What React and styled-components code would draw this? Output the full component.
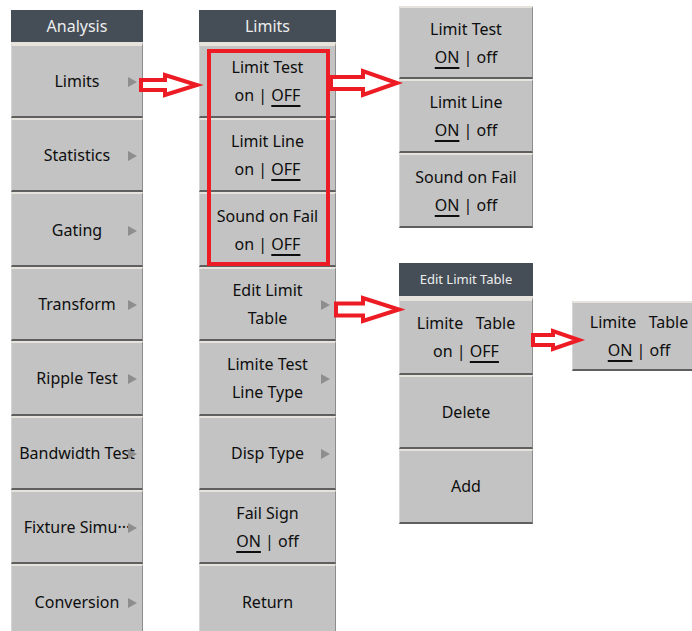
import React from "react";
import styled, { createGlobalStyle } from "styled-components";

const Global = createGlobalStyle`
  html, body { margin: 0; padding: 0; background: #ffffff; }
  body { font-family: "Noto Sans", "Open Sans", sans-serif; }
`;

const Canvas = styled.div`
  position: relative;
  width: 692px;
  height: 631px;
  overflow: hidden;
  background: #fff;
  display: flex;
  align-items: flex-start;
  padding-left: 11px;
  box-sizing: border-box;
`;

const Column = styled.div`
  display: flex;
  flex-direction: column;
  flex: none;
  width: ${(p) => p.$w}px;
  margin-top: ${(p) => p.$top}px;
  margin-left: ${(p) => p.$left || 0}px;
`;

const Panel = styled.div`
  display: flex;
  flex-direction: column;
  margin-top: ${(p) => p.$top || 0}px;
`;

const Header = styled.div`
  height: ${(p) => p.$h || 32}px;
  background: #454d57;
  color: #ededed;
  font-size: ${(p) => p.$fs || 16}px;
  display: flex;
  align-items: center;
  justify-content: center;
  white-space: nowrap;
`;

const Button = styled.div`
  position: relative;
  box-sizing: border-box;
  height: ${(p) => p.$h || 74.4}px;
  background: #c3c3c3;
  border-top: ${(p) => p.$bt || 2}px solid #e6e3dc;
  border-bottom: 2px solid #5f5f5f;
  border-left: 1px solid #d6d6d6;
  border-right: 1px solid #8d8d8d;
  display: flex;
  flex-direction: column;
  align-items: center;
  justify-content: center;
  font-size: 16px;
  line-height: 28px;
  color: #0e0e0e;
  white-space: pre;
`;

const Line = styled.span`
  display: block;
  text-align: center;
`;

const Under = styled.span`
  text-decoration: underline;
  text-decoration-thickness: 2px;
  text-underline-offset: 4px;
`;

const Tri = styled.span`
  position: absolute;
  right: 5px;
  top: 50%;
  margin-top: -4px;
  width: 0;
  height: 0;
  border-left: 9px solid #8e8e8e;
  border-top: 5px solid transparent;
  border-bottom: 5px solid transparent;
`;

const RedBox = styled.div`
  position: absolute;
  left: 207px;
  top: 49px;
  width: 123px;
  height: 217px;
  box-sizing: border-box;
  border: 4px solid #ed1c24;
  pointer-events: none;
`;

const ArrowSvg = styled.svg`
  position: absolute;
  left: ${(p) => p.$x}px;
  top: ${(p) => p.$y}px;
  overflow: visible;
`;

function Arrow({ x, y, w, h, hx, hs }) {
  const s = 2;
  const cy = h / 2;
  const pts = [
    [s, cy - hs],
    [hx, cy - hs],
    [hx, s],
    [w - s, cy],
    [hx, h - s],
    [hx, cy + hs],
    [s, cy + hs],
  ]
    .map((p) => p.join(","))
    .join(" ");
  return (
    <ArrowSvg $x={x} $y={y} width={w} height={h} viewBox={`0 0 ${w} ${h}`}>
      <polygon points={pts} fill="#ffffff" stroke="#ed1c24" strokeWidth="4" strokeLinejoin="miter" />
    </ArrowSvg>
  );
}

function OnOff({ on }) {
  return on ? (
    <Line>
      <Under>ON</Under> | off
    </Line>
  ) : (
    <Line>
      on | <Under>OFF</Under>
    </Line>
  );
}

export default function App() {
  const col1 = [
    "Limits",
    "Statistics",
    "Gating",
    "Transform",
    "Ripple Test",
    "Bandwidth Test",
    "Fixture Simu\u00b7\u00b7\u00b7",
  ];
  return (
    <>
      <Global />
      <Canvas>
        <Column $w={132} $top={10}>
          <Header>Analysis</Header>
          {col1.map((t, i) => (
            <Button key={t} $h={i === 0 ? 76 : 74.4} $bt={i === 0 ? 4 : 2}>
              <Line>{t}</Line>
              <Tri />
            </Button>
          ))}
          <Button>
            <Line>Conversion</Line>
            <Tri />
          </Button>
        </Column>

        <Column $w={137} $top={10} $left={56}>
          <Header>Limits</Header>
          <Button $h={76} $bt={4}>
            <Line>Limit Test</Line>
            <OnOff />
          </Button>
          <Button>
            <Line>Limit Line</Line>
            <OnOff />
          </Button>
          <Button>
            <Line>Sound on Fail</Line>
            <OnOff />
          </Button>
          <Button>
            <Line>Edit Limit</Line>
            <Line>Table</Line>
            <Tri />
          </Button>
          <Button>
            <Line>Limite Test</Line>
            <Line>Line Type</Line>
            <Tri />
          </Button>
          <Button>
            <Line>Disp Type</Line>
            <Tri />
          </Button>
          <Button>
            <Line>Fail Sign</Line>
            <OnOff on />
          </Button>
          <Button>
            <Line>Return</Line>
          </Button>
        </Column>

        <Column $w={134} $top={6} $left={63}>
          <Panel>
            <Button $h={73}>
              <Line>Limit Test</Line>
              <OnOff on />
            </Button>
            <Button>
              <Line>Limit Line</Line>
              <OnOff on />
            </Button>
            <Button>
              <Line>Sound on Fail</Line>
              <OnOff on />
            </Button>
          </Panel>
          <Panel $top={35}>
            <Header $h={33} $fs={13}>Edit Limit Table</Header>
            <Button $h={79} $bt={5}>
              <Line>{"Limite   Table"}</Line>
              <OnOff />
            </Button>
            <Button>
              <Line>Delete</Line>
            </Button>
            <Button>
              <Line>Add</Line>
            </Button>
          </Panel>
        </Column>

        <Column $w={134} $top={301} $left={39}>
          <Button $h={70}>
            <Line>{"Limite   Table"}</Line>
            <OnOff on />
          </Button>
        </Column>

        <RedBox />
        <Arrow x={139} y={73} w={60} h={24} hx={26} hs={5} />
        <Arrow x={329} y={69} w={70} h={28} hx={34} hs={6} />
        <Arrow x={334} y={296} w={67} h={27} hx={29} hs={6} />
        <Arrow x={531} y={329} w={50} h={22} hx={22} hs={5} />
      </Canvas>
    </>
  );
}
